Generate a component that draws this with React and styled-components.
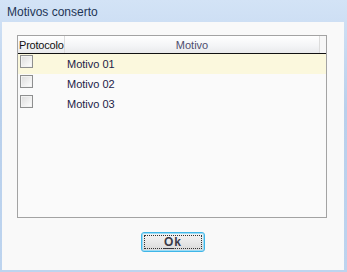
import React from 'react'
import styled, { createGlobalStyle } from 'styled-components'

const GlobalStyle = createGlobalStyle`
	html, body {
		margin: 0;
		padding: 0;
		background: #bcd3ee;
	}
	* {
		box-sizing: border-box;
	}
`

const Window = styled.div`
	width: 347px;
	height: 272px;
	display: flex;
	flex-direction: column;
	background: linear-gradient(#d3e3f6, #b9d0ec 40%, #bdd4ef);
	font-family: 'Liberation Sans', Arial, sans-serif;
`

const TitleBar = styled.div`
	height: 22px;
	flex: none;
	display: flex;
	align-items: center;
	padding: 1px 0 0 7px;
	font-size: 12px;
	color: #1e3555;
`

const Client = styled.div`
	flex: 1;
	margin: 0 3px 2px 2px;
	background: #f9f9f9;
	display: flex;
	flex-direction: column;
	align-items: center;
	padding: 13px 17px 0 15px;
`

const ListBox = styled.div`
	width: 310px;
	height: 183px;
	flex: none;
	border: 1px solid #a3a3a3;
	background: #fafafa;
	display: flex;
	flex-direction: column;
`

const Header = styled.div`
	height: 18px;
	flex: none;
	display: grid;
	grid-template-columns: 47px 255px 1fr;
	background: linear-gradient(#ffffff, #f3f4f6 60%, #e9eaec);
	border-bottom: 1px solid #111;
	font-size: 11px;
`

const HeaderCell = styled.div`
	display: flex;
	align-items: center;
	justify-content: ${p => (p.$center ? 'center' : 'flex-start')};
	padding-left: ${p => (p.$center ? 0 : 1)}px;
	letter-spacing: ${p => (p.$center ? 0 : -0.2)}px;
	white-space: nowrap;
	overflow: hidden;
	border-right: ${p => (p.$last ? 'none' : '1px solid #dcdcdc')};
	color: ${p => (p.$muted ? '#4e4e6e' : '#111')};
	background: ${p => (p.$last ? '#f7f7f7' : 'transparent')};
`

const Row = styled.div`
	height: 20px;
	flex: none;
	display: grid;
	grid-template-columns: 49px 1fr;
	align-items: start;
	background: ${p => (p.$selected ? '#fbf8dd' : 'transparent')};
	font-size: 11px;
	color: #1c1c48;
`

const CheckBox = styled.span`
	display: block;
	width: 13px;
	height: 13px;
	margin: 1px 0 0 2px;
	border: 1px solid #8e8f8f;
	background: linear-gradient(135deg, #dcdcdc, #f4f4f4 70%, #ffffff);
	box-shadow: inset 0 0 0 1px #f2f2f2;
`

const RowText = styled.span`
	line-height: 20px;
`

const Footer = styled.div`
	padding-top: 14px;
	display: flex;
	justify-content: center;
	width: 100%;
	padding-left: 2px;
`

const Button = styled.button`
	width: 64px;
	height: 20px;
	padding: 0;
	border: 1px solid #3fb6e8;
	border-radius: 3px;
	background: linear-gradient(#f4f4f4, #e8e8e8 50%, #d8d8d8);
	box-shadow: inset 0 0 0 1px #9ddcf5;
	font-family: 'Liberation Sans', Arial, sans-serif;
	font-size: 12px;
	font-weight: 700;
	letter-spacing: 1px;
	color: #3a3a48;
	display: flex;
	align-items: center;
	justify-content: center;
	position: relative;

	&::after {
		content: '';
		position: absolute;
		inset: 2px;
		border: 1px dotted #333;
	}

	u {
		text-decoration-thickness: 1px;
		text-underline-offset: 2px;
	}
`

const rows = ['Motivo 01', 'Motivo 02', 'Motivo 03']

export default function App() {
	return (
		<>
			<GlobalStyle />
			<Window>
				<TitleBar>Motivos conserto</TitleBar>
				<Client>
					<ListBox>
						<Header>
							<HeaderCell>Protocolo</HeaderCell>
							<HeaderCell $center $muted>
								Motivo
							</HeaderCell>
							<HeaderCell $last />
						</Header>
						{rows.map((r, i) => (
							<Row key={r} $selected={i === 0}>
								<CheckBox />
								<RowText>{r}</RowText>
							</Row>
						))}
					</ListBox>
					<Footer>
						<Button>
							<span>
								<u>O</u>k
							</span>
						</Button>
					</Footer>
				</Client>
			</Window>
		</>
	)
}
